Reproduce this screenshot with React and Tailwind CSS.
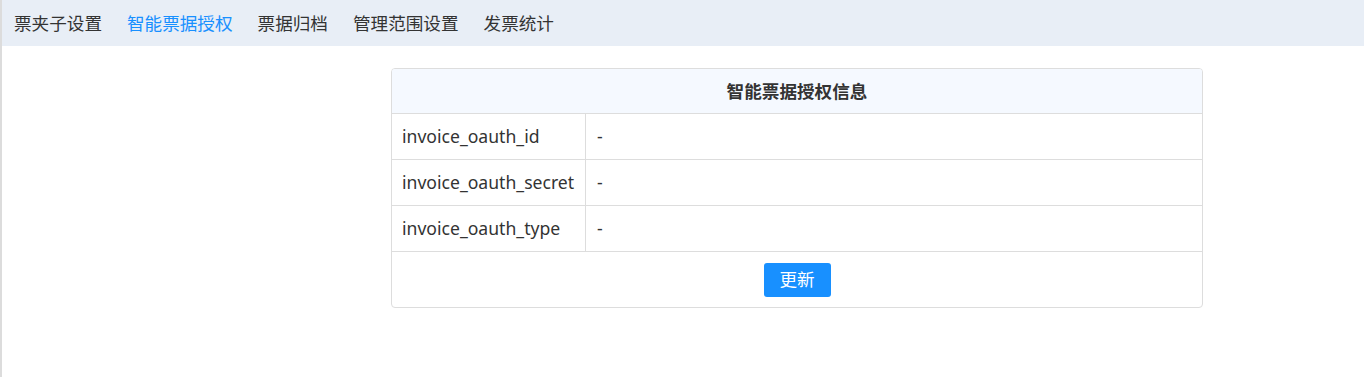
import React from 'react';

const navItems = ['票夹子设置', '智能票据授权', '票据归档', '管理范围设置', '发票统计'];

const rows = [
  { key: 'invoice_oauth_id', value: '-' },
  { key: 'invoice_oauth_secret', value: '-' },
  { key: 'invoice_oauth_type', value: '-' },
];

export default function App() {
  return (
    <div className="min-h-[377px] border-l-2 border-[#dcdcdc] bg-white text-[17.6px] text-[#333] font-['Noto_Sans','Noto_Sans_CJK_SC',sans-serif]">
      {/* top tabs */}
      <div className="flex h-[46px] items-center gap-[25px] bg-[#e8eef6] pl-[12px]">
        {navItems.map((item, i) => (
          <span key={item} className={i === 1 ? 'text-[#1890ff]' : 'text-[#333]'}>
            {item}
          </span>
        ))}
      </div>

      {/* auth info table */}
      <div className="ml-[389px] mt-[22px] w-[812px] overflow-hidden rounded-[4px] border border-[#dddddd]">
        <div className="flex h-[45px] items-center justify-center border-b border-[#dddddd] bg-[#f5f9ff] font-bold">
          智能票据授权信息
        </div>
        {rows.map((row) => (
          <div key={row.key} className="grid h-[46px] grid-cols-[194px_1fr] border-b border-[#dddddd]">
            <div className="flex items-center border-r border-[#dddddd] pl-[10px]">{row.key}</div>
            <div className="flex items-center pl-[11px]">{row.value}</div>
          </div>
        ))}
        <div className="flex h-[55px] items-center justify-center">
          <button className="h-[34px] w-[67px] rounded-[3px] bg-[#1890ff] text-white">更新</button>
        </div>
      </div>
    </div>
  );
}
